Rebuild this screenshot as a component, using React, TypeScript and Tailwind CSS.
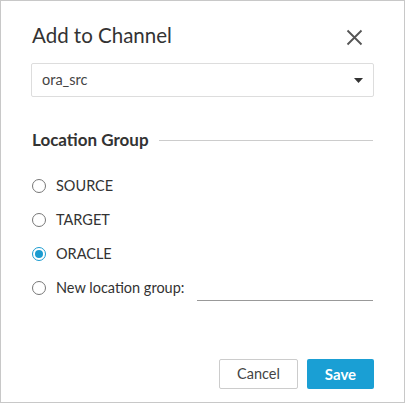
import { useState } from 'react';

const GROUPS = ['SOURCE', 'TARGET', 'ORACLE'];

function Radio({ checked }: { checked: boolean }) {
  return (
    <span
      className={
        'flex h-[14px] w-[14px] shrink-0 items-center justify-center rounded-full border bg-white ' +
        (checked ? 'border-[#1a9bd0]' : 'border-[#777]')
      }
    >
      {checked && <span className="h-[8px] w-[8px] rounded-full bg-[#1a9bd0]" />}
    </span>
  );
}

export default function App() {
  const [group, setGroup] = useState('ORACLE');

  return (
    <div className="h-[403px] w-[405px] border border-[#c8c8c8] bg-white font-['Lato',sans-serif] text-[#333]">
      <div className="flex items-center justify-between pl-[31px] pr-[41px] pt-[22px]">
        <h1 className="text-[20.5px] leading-[24px] text-[#333]">Add to Channel</h1>
        <svg width="17" height="17" viewBox="0 0 17 17" className="mt-[4px] text-[#555]">
          <path d="M1.5 1.5 L15.5 15.5 M15.5 1.5 L1.5 15.5" stroke="currentColor" strokeWidth="1.8" />
        </svg>
      </div>

      <div className="mx-[30px] mt-[16px] flex h-[34px] items-center justify-between rounded-[2px] border border-[#ddd] pl-[10px] pr-[10px]">
        <span className="text-[14.5px] text-[#444]">ora_src</span>
        <svg width="9" height="5" viewBox="0 0 9 5">
          <path d="M0 0 H9 L4.5 5 Z" fill="#333" />
        </svg>
      </div>

      <div className="mx-[31px] mt-[33px] flex items-center gap-[10px]">
        <span className="text-[17px] font-bold leading-[20px] text-[#333]">Location Group</span>
        <span className="h-px flex-1 bg-[#ccc]" />
      </div>

      <div className="mx-[31px] mt-[19px] flex flex-col">
        {GROUPS.map((g) => (
          <label key={g} className="flex h-[34px] items-center gap-[10px] text-[14.5px]" onClick={() => setGroup(g)}>
            <Radio checked={group === g} />
            <span className="text-[#333]">{g}</span>
          </label>
        ))}
        <label className="flex h-[34px] items-center gap-[10px] text-[14.5px]" onClick={() => setGroup('new')}>
          <Radio checked={group === 'new'} />
          <span className="text-[#333]">New location group:</span>
          <span className="ml-[3px] mt-[24px] h-px flex-1 bg-[#999]" />
        </label>
      </div>

      <div className="mr-[30px] mt-[54px] flex justify-end gap-[9px]">
        <button className="h-[30px] w-[79px] rounded-[2px] border border-[#ccc] bg-white text-[14.5px] text-[#444]">
          Cancel
        </button>
        <button className="h-[30px] w-[67px] rounded-[2px] bg-[#1a9fd4] text-[15px] font-bold text-white">
          Save
        </button>
      </div>
    </div>
  );
}
